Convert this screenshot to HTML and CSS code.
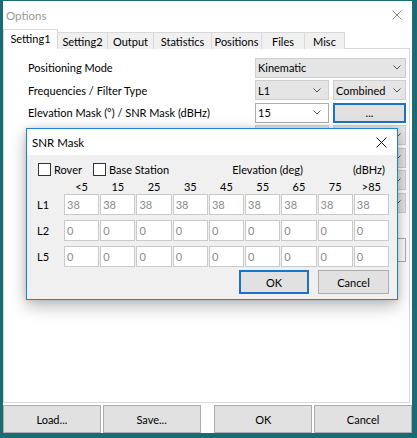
FILE: index.html
```html
<!DOCTYPE html>
<html>
<head>
<meta charset="utf-8">
<link rel="stylesheet" href="styles.css">
</head>
<body>
<div class="window">
  <div class="titlebar">
    <span class="title">Options</span>
    <svg class="win-close" width="10" height="10" viewBox="0 0 10 10"><path d="M0.5 0.5L9.5 9.5M9.5 0.5L0.5 9.5" stroke="#8a8a8a" stroke-width="1" fill="none"/></svg>
  </div>
  <div class="tabs">
    <div class="tab active t1">Setting1</div>
    <div class="tab t2">Setting2</div>
    <div class="tab t3">Output</div>
    <div class="tab t4">Statistics</div>
    <div class="tab t5">Positions</div>
    <div class="tab t6">Files</div>
    <div class="tab t7">Misc</div>
  </div>
  <div class="panel">
    <div class="form">
      <div class="label">Positioning Mode</div>
      <div class="combo span2"><span>Kinematic</span><svg class="chev" width="8" height="5" viewBox="0 0 8 5"><path d="M0.5 0.5L4 4L7.5 0.5" stroke="#555" fill="none"/></svg></div>

      <div class="label">Frequencies / Filter Type</div>
      <div class="combo left"><span>L1</span><svg class="chev" width="8" height="5" viewBox="0 0 8 5"><path d="M0.5 0.5L4 4L7.5 0.5" stroke="#555" fill="none"/></svg></div>
      <div class="combo"><span>Combined</span><svg class="chev" width="8" height="5" viewBox="0 0 8 5"><path d="M0.5 0.5L4 4L7.5 0.5" stroke="#555" fill="none"/></svg></div>

      <div class="label">Elevation Mask (°) / SNR Mask (dBHz)</div>
      <div class="combo edit left"><span>15</span><svg class="chev" width="8" height="5" viewBox="0 0 8 5"><path d="M0.5 0.5L4 4L7.5 0.5" stroke="#555" fill="none"/></svg></div>
      <div class="btn focus">...</div>

      <!-- rows below are covered by the SNR Mask dialog; only their right edges show -->
      <div class="label"></div>
      <div class="combo left"><span></span><svg class="chev" width="8" height="5" viewBox="0 0 8 5"><path d="M0.5 0.5L4 4L7.5 0.5" stroke="#555" fill="none"/></svg></div>
      <div class="combo"><span></span><svg class="chev" width="8" height="5" viewBox="0 0 8 5"><path d="M0.5 0.5L4 4L7.5 0.5" stroke="#555" fill="none"/></svg></div>

      <div class="label"></div>
      <div class="combo span2"><span></span><svg class="chev" width="8" height="5" viewBox="0 0 8 5"><path d="M0.5 0.5L4 4L7.5 0.5" stroke="#555" fill="none"/></svg></div>

      <div class="label"></div>
      <div class="combo span2"><span></span><svg class="chev" width="8" height="5" viewBox="0 0 8 5"><path d="M0.5 0.5L4 4L7.5 0.5" stroke="#555" fill="none"/></svg></div>

      <div class="label"></div>
      <div class="combo span2"><span></span><svg class="chev" width="8" height="5" viewBox="0 0 8 5"><path d="M0.5 0.5L4 4L7.5 0.5" stroke="#555" fill="none"/></svg></div>

      <div class="label span3"></div>

      <div class="label"></div>
      <div class="textbox span2"></div>
    </div>
  </div>
  <div class="footer">
    <div class="fbtn">Load...</div>
    <div class="fbtn">Save...</div>
    <div class="fspace"></div>
    <div class="fbtn">OK</div>
    <div class="fbtn">Cancel</div>
  </div>

  <div class="dialog">
    <div class="dtitle">
      <span>SNR Mask</span>
      <svg class="dclose" width="11" height="11" viewBox="0 0 11 11"><path d="M0.5 0.5L10.5 10.5M10.5 0.5L0.5 10.5" stroke="#111" stroke-width="1" fill="none"/></svg>
    </div>
    <div class="dbody">
      <div class="checks">
        <label class="chk"><span class="box"></span>Rover</label>
        <label class="chk"><span class="box"></span>Base Station</label>
        <span class="elev">Elevation (deg)</span>
        <span class="dbhz">(dBHz)</span>
      </div>
      <div class="hdrow">
        <div></div>
        <div class="hd">&lt;5</div><div class="hd">15</div><div class="hd">25</div><div class="hd">35</div><div class="hd">45</div><div class="hd">55</div><div class="hd">65</div><div class="hd">75</div><div class="hd">&gt;85</div>
      </div>
      <div class="grid">
        <div class="rl">L1</div>
        <div class="in">38</div><div class="in">38</div><div class="in">38</div><div class="in">38</div><div class="in">38</div><div class="in">38</div><div class="in">38</div><div class="in">38</div><div class="in">38</div>

        <div class="rl">L2</div>
        <div class="in">0</div><div class="in">0</div><div class="in">0</div><div class="in">0</div><div class="in">0</div><div class="in">0</div><div class="in">0</div><div class="in">0</div><div class="in">0</div>

        <div class="rl">L5</div>
        <div class="in">0</div><div class="in">0</div><div class="in">0</div><div class="in">0</div><div class="in">0</div><div class="in">0</div><div class="in">0</div><div class="in">0</div><div class="in">0</div>
      </div>
      <div class="dbtns">
        <div class="dbtn ok">OK</div>
        <div class="dbtn cancel">Cancel</div>
      </div>
    </div>
  </div>
</div>
</body>
</html>
```

FILE: styles.css
```css
* { box-sizing: border-box; }
html, body { margin: 0; padding: 0; }
body {
  background: #1c6a73;
  width: 417px;
  height: 438px;
  overflow: hidden;
  font-family: Lato, "Noto Sans", sans-serif;
  font-size: 11px;
  line-height: 13px;
  color: #000;
}
.window {
  position: relative;
  margin: 1px 0 0 3px;
  width: 409px;
  height: 432px;
  background: #fff;
  display: flex;
  flex-direction: column;
}
.titlebar {
  height: 28px;
  display: flex;
  align-items: center;
  justify-content: space-between;
  padding: 0 10px 0 3px;
}
.title { color: #999; font-size: 11.5px; }
.tabs {
  height: 20px;
  display: flex;
  align-items: flex-end;
  position: relative;
  z-index: 1;
  margin-bottom: -1px;
}
.tab {
  height: 17px;
  background: #f0f0f0;
  border: 1px solid #d9d9d9;
  border-bottom: none;
  margin-left: -1px;
  display: flex;
  align-items: center;
  justify-content: center;
  line-height: 1;
}
.tab.active {
  height: 20px;
  background: #fff;
  margin-left: 0;
  padding-bottom: 2px;
}
.t1 { width: 55px; }
.t2 { width: 51px; }
.t3 { width: 47px; }
.t4 { width: 59px; }
.t5 { width: 51px; }
.t6 { width: 44px; }
.t7 { width: 41px; }
.panel {
  width: 407px;
  height: 355px;
  border: 1px solid #d9d9d9;
  background: #fff;
}
.form {
  display: grid;
  grid-template-columns: 1fr 74px 73px;
  grid-auto-rows: 20px;
  column-gap: 4px;
  row-gap: 2.5px;
  padding: 8.5px 3px 0 24px;
}
.label {
  display: flex;
  align-items: center;
  white-space: nowrap;
}
.span2 { grid-column: span 2; }
.span3 { grid-column: span 3; }
.combo {
  background: #e5e5e5;
  border: 1px solid #cfcfcf;
  display: flex;
  align-items: center;
  justify-content: space-between;
  padding: 0 4px 0 2px;
}
.combo.left { padding-right: 7px; }
.combo.edit { background: #fff; border-color: #adadad; }
.chev { display: block; }
.btn {
  background: #e1e1e1;
  display: flex;
  align-items: center;
  justify-content: center;
}
.btn.focus { border: 2px solid #1a73c8; }
.textbox {
  height: 24px;
  border: 1px solid #adadad;
  background: #fff;
}
.footer {
  margin-top: 2px;
  height: 28px;
  display: flex;
  gap: 2px;
}
.fbtn {
  background: #e1e1e1;
  border: 1px solid #adadad;
  display: flex;
  align-items: center;
  justify-content: center;
  width: 98px;
}
.fspace { width: 10px; }

/* SNR Mask dialog */
.dialog {
  position: absolute;
  left: 23px;
  top: 127px;
  width: 372px;
  height: 172px;
  border: 1px solid #1883d7;
  background: #f0f0f0;
  box-shadow: 0 6px 16px rgba(0, 0, 0, 0.28), 0 0 6px rgba(0, 0, 0, 0.12);
  z-index: 5;
  display: flex;
  flex-direction: column;
}
.dtitle {
  height: 26px;
  background: #fff;
  display: flex;
  align-items: center;
  justify-content: space-between;
  padding: 0 10px 0 5px;
  font-size: 11.5px;
}
.dbody {
  padding: 7px 8px 0 10px;
}
.checks {
  height: 14px;
  display: flex;
  align-items: center;
}
.chk { display: flex; align-items: center; }
.chk .box {
  width: 13px;
  height: 13px;
  border: 1px solid #333;
  background: #fff;
  margin: 0 3px 0 1px;
}
.chk + .chk { margin-left: 10px; }
.elev { margin-left: auto; }
.dbhz { margin-left: 50px; margin-right: 4px; }
.hdrow {
  margin-top: 4px;
  height: 14px;
  display: grid;
  grid-template-columns: 26px repeat(9, 1fr);
  column-gap: 1px;
}
.hd { text-align: center; line-height: 14px; }
.grid {
  display: grid;
  grid-template-columns: 26px repeat(9, 1fr);
  grid-template-rows: 21px 21px 21px;
  column-gap: 1px;
  row-gap: 5px;
}
.rl { display: flex; align-items: center; }
.in {
  background: #fff;
  border: 1px solid #cacaca;
  color: #8a8a8a;
  display: flex;
  align-items: center;
  padding-left: 2px;
}
.dbtns {
  margin-top: 3px;
  display: flex;
  justify-content: flex-end;
  gap: 9px;
}
.dbtn {
  height: 24px;
  background: #e1e1e1;
  display: flex;
  align-items: center;
  justify-content: center;
}
.dbtn.ok { width: 70px; border: 2px solid #1a73c8; }
.dbtn.cancel { width: 71px; border: 1px solid #adadad; }
```
